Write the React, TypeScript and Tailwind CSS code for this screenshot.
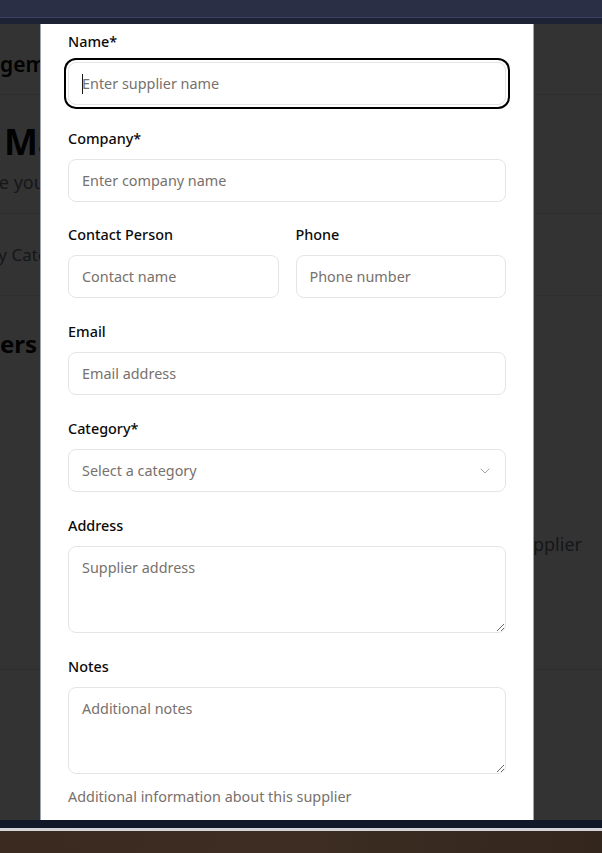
import { ChevronDown } from "lucide-react";

const font = { fontFamily: '"Noto Sans", "Open Sans", sans-serif' };

const inputCls =
  "block w-full h-[43px] rounded-lg border border-[#e7e5e4] bg-white pl-[13px] pr-3 text-[14.4px] text-[#0c0a09] placeholder:text-[#78716c] outline-none";

const areaCls =
  "block w-full h-[87px] rounded-lg border border-[#e7e5e4] bg-white pl-[13px] pr-3 py-[10px] text-[14.4px] text-[#0c0a09] placeholder:text-[#78716c] outline-none";

const Label = ({ text }: { text: string }) => (
  <label className="block h-5 leading-5 text-[14.4px] font-medium text-[#0c0a09] mb-[10px]">{text}</label>
);

const BackgroundPage = () => {
  return (
    <div className="h-full bg-white text-[#0a0a0a]">
      <div className="h-[71px] border-b border-gray-200 flex items-center pt-3 whitespace-nowrap text-[21px] font-semibold">
        <span className="w-0 shrink-0 flex justify-end">Inventory Mana</span>
        <span>gement</span>
      </div>
      <div className="border-b border-gray-200 pt-[27px] pb-[17px]">
        <h1 className="pl-[4px] text-[36px] leading-10 font-bold whitespace-nowrap">Management</h1>
        <div className="flex whitespace-nowrap mt-[6px] text-[18px] leading-7 text-gray-500">
          <span className="w-[9px] shrink-0 flex justify-end">Manage</span>
          <span>&nbsp;your suppliers and vendors</span>
        </div>
      </div>
      <div className="h-[82px] border-b border-gray-200 flex items-center whitespace-nowrap text-[17px] text-gray-500">
        <span className="w-[7px] shrink-0 flex justify-end">By</span>
        <span>&nbsp;Category</span>
      </div>
      <div className="h-[374px] border-b border-gray-200 flex flex-col">
        <div className="flex whitespace-nowrap pt-[32px] text-[24px] leading-8 font-bold">
          <span className="w-[0px] shrink-0 flex justify-end">Suppli</span>
          <span>ers</span>
        </div>
        <div className="flex justify-end pr-[20px] mt-[170px] text-[18px] leading-7 text-gray-500 whitespace-nowrap">
          Get started by adding your first supplier
        </div>
      </div>
    </div>
  );
};

const SupplierForm = () => {
  return (
    <div className="flex flex-col gap-6">
      <div>
        <Label text="Name*" />
        <div className="relative">
          <input
            className={`${inputCls} ring-2 ring-black ring-offset-2 ring-offset-white`}
            placeholder="Enter supplier name"
          />
          <span className="absolute left-[14px] top-[12px] w-px h-[20px] bg-[#1c1917]" />
        </div>
      </div>
      <div className="-mb-px">
        <Label text="Company*" />
        <input className={inputCls} placeholder="Enter company name" />
      </div>
      <div className="grid grid-cols-2 gap-[17px]">
        <div>
          <Label text="Contact Person" />
          <input className={inputCls} placeholder="Contact name" />
        </div>
        <div>
          <Label text="Phone" />
          <input className={inputCls} placeholder="Phone number" />
        </div>
      </div>
      <div>
        <Label text="Email" />
        <input className={inputCls} placeholder="Email address" />
      </div>
      <div>
        <Label text="Category*" />
        <button
          type="button"
          className="w-full h-[43px] rounded-lg border border-[#e7e5e4] bg-white pl-[13px] pr-3 flex items-center justify-between text-[14.4px] text-[#78716c]"
        >
          <span>Select a category</span>
          <ChevronDown size={16} strokeWidth={1.5} className="text-[#a8a29e]" />
        </button>
      </div>
      <div>
        <Label text="Address" />
        <textarea className={areaCls} placeholder="Supplier address" />
      </div>
      <div>
        <Label text="Notes" />
        <textarea className={areaCls} placeholder="Additional notes" />
        <p className="mt-[13px] text-[14.4px] leading-5 text-[#78716c]">Additional information about this supplier</p>
      </div>
    </div>
  );
};

export default function App() {
  return (
    <div className="w-[602px] h-[853px] overflow-hidden flex flex-col" style={font}>
      <div className="h-[17px] bg-[#2a2f46]" />
      <div className="h-px bg-[#3a4160]" />
      <div className="h-[6px] bg-[#1e2235]" />
      <div className="relative h-[796px] overflow-hidden">
        <BackgroundPage />
        <div className="absolute inset-0 bg-black/80" />
        <div className="absolute left-[40px] top-0 bottom-0 w-[494px] bg-white border-x border-[#9ca3af] px-[27px] pt-[8px] overflow-hidden">
          <SupplierForm />
        </div>
      </div>
      <div className="h-[8px] bg-[#111827]" />
      <div className="h-[3px] bg-[#d4d4d8]" />
      <div className="flex-1 bg-gradient-to-r from-[#3a2a1f] via-[#3d2d22] to-[#33261d]" />
    </div>
  );
}
